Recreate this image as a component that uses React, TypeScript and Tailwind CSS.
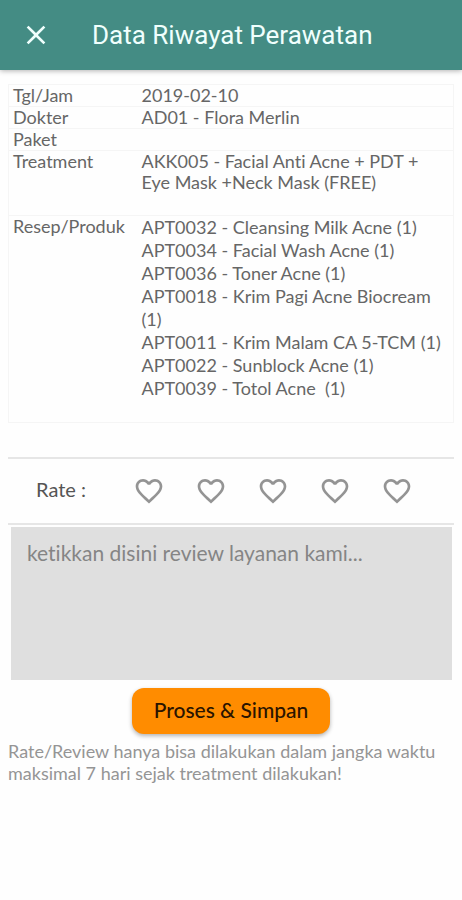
import { useState } from "react";
import { MdClose, MdFavorite, MdFavoriteBorder } from "react-icons/md";

const products = [
  "APT0032 - Cleansing Milk Acne (1)",
  "APT0034 - Facial Wash Acne (1)",
  "APT0036 - Toner Acne (1)",
  "APT0018 - Krim Pagi Acne Biocream (1)",
  "APT0011 - Krim Malam CA 5-TCM (1)",
  "APT0022 - Sunblock Acne (1)",
  "APT0039 - Totol Acne  (1)",
];

const rows = [
  { label: "Tgl/Jam", value: "2019-02-10" },
  { label: "Dokter", value: "AD01 - Flora Merlin" },
  { label: "Paket", value: "" },
];

function Header() {
  return (
    <header className="relative flex h-[70px] items-center bg-[#448c84] px-5 text-[#f0fffd] shadow-[0_1px_5px_rgba(0,0,0,0.3)]">
      <button type="button" aria-label="Tutup">
        <MdClose className="size-8" />
      </button>
      <h1 className="ml-10 font-['Roboto',sans-serif] text-[26px] leading-8">Data Riwayat Perawatan</h1>
    </header>
  );
}

function Details() {
  return (
    <table className="w-full table-fixed border-collapse border border-[#f5f5f5] text-left text-lg leading-5 text-[#666666]">
      <tbody>
        {rows.map((row) => (
          <tr key={row.label} className="border-b border-[#f5f5f5] align-top">
            <th scope="row" className="w-[129px] pb-px pl-1 font-normal">{row.label}</th>
            <td className="pb-px pl-1">{row.value}</td>
          </tr>
        ))}
        <tr className="border-b border-[#f5f5f5] align-top">
          <th scope="row" className="pl-1 font-normal">Treatment</th>
          <td className="pr-5 pb-[22px] pl-1 leading-[21px]">AKK005 - Facial Anti Acne + PDT + Eye Mask +Neck Mask (FREE)</td>
        </tr>
        <tr className="align-top">
          <th scope="row" className="pl-1 font-normal">Resep/Produk</th>
          <td className="pb-[22px] pl-1 leading-[23px]">
            {products.map((name) => (
              <p key={name} className="whitespace-pre-wrap">{name}</p>
            ))}
          </td>
        </tr>
      </tbody>
    </table>
  );
}

export default function App() {
  const [rate, setRate] = useState(0);

  return (
    <div className="min-h-screen bg-[#fefefe] font-['Lato','Liberation_Sans',sans-serif] [font-variant-ligatures:none]">
      <Header />
      <main className="px-2 pt-[14px]">
        <Details />

        <section className="mt-[34px] flex items-center border-y-2 border-[#e6e6e6] py-4 pl-7 text-[#555555]">
          <span id="rate" className="w-[97px] pb-1 text-xl leading-7">Rate :</span>
          <div role="group" aria-labelledby="rate" className="flex gap-[30px]">
            {[1, 2, 3, 4, 5].map((n) => (
              <button key={n} type="button" aria-label={`Rate ${n}`} onClick={() => setRate(n)} className="text-[#949494]">
                {n <= rate ? <MdFavorite className="size-8" /> : <MdFavoriteBorder className="size-8" />}
              </button>
            ))}
          </div>
        </section>

        <form className="flex flex-col items-center" onSubmit={(e) => e.preventDefault()}>
          <div className="w-full pt-0.5 pr-0.5 pl-[3px]">
            <textarea
              aria-label="Review"
              placeholder="ketikkan disini review layanan kami..."
              className="block h-[153px] w-full resize-none bg-[#dfdfdf] px-4 py-3 text-[21px] leading-7 text-[#505050] outline-none placeholder:text-[#858585]"
            />
          </div>
          <button
            type="submit"
            className="mt-2 h-[46px] rounded-xl bg-[#ff8c00] px-[22px] pb-0.5 text-[21px] font-medium text-[#2a1400] shadow-[0_2px_4px_rgba(0,0,0,0.3)]"
          >
            Proses &amp; Simpan
          </button>
        </form>

        <p className="mt-1.5 text-lg leading-[22px] text-[#959595]">
          Rate/Review hanya bisa dilakukan dalam jangka waktu maksimal 7 hari sejak treatment dilakukan!
        </p>
      </main>
    </div>
  );
}
